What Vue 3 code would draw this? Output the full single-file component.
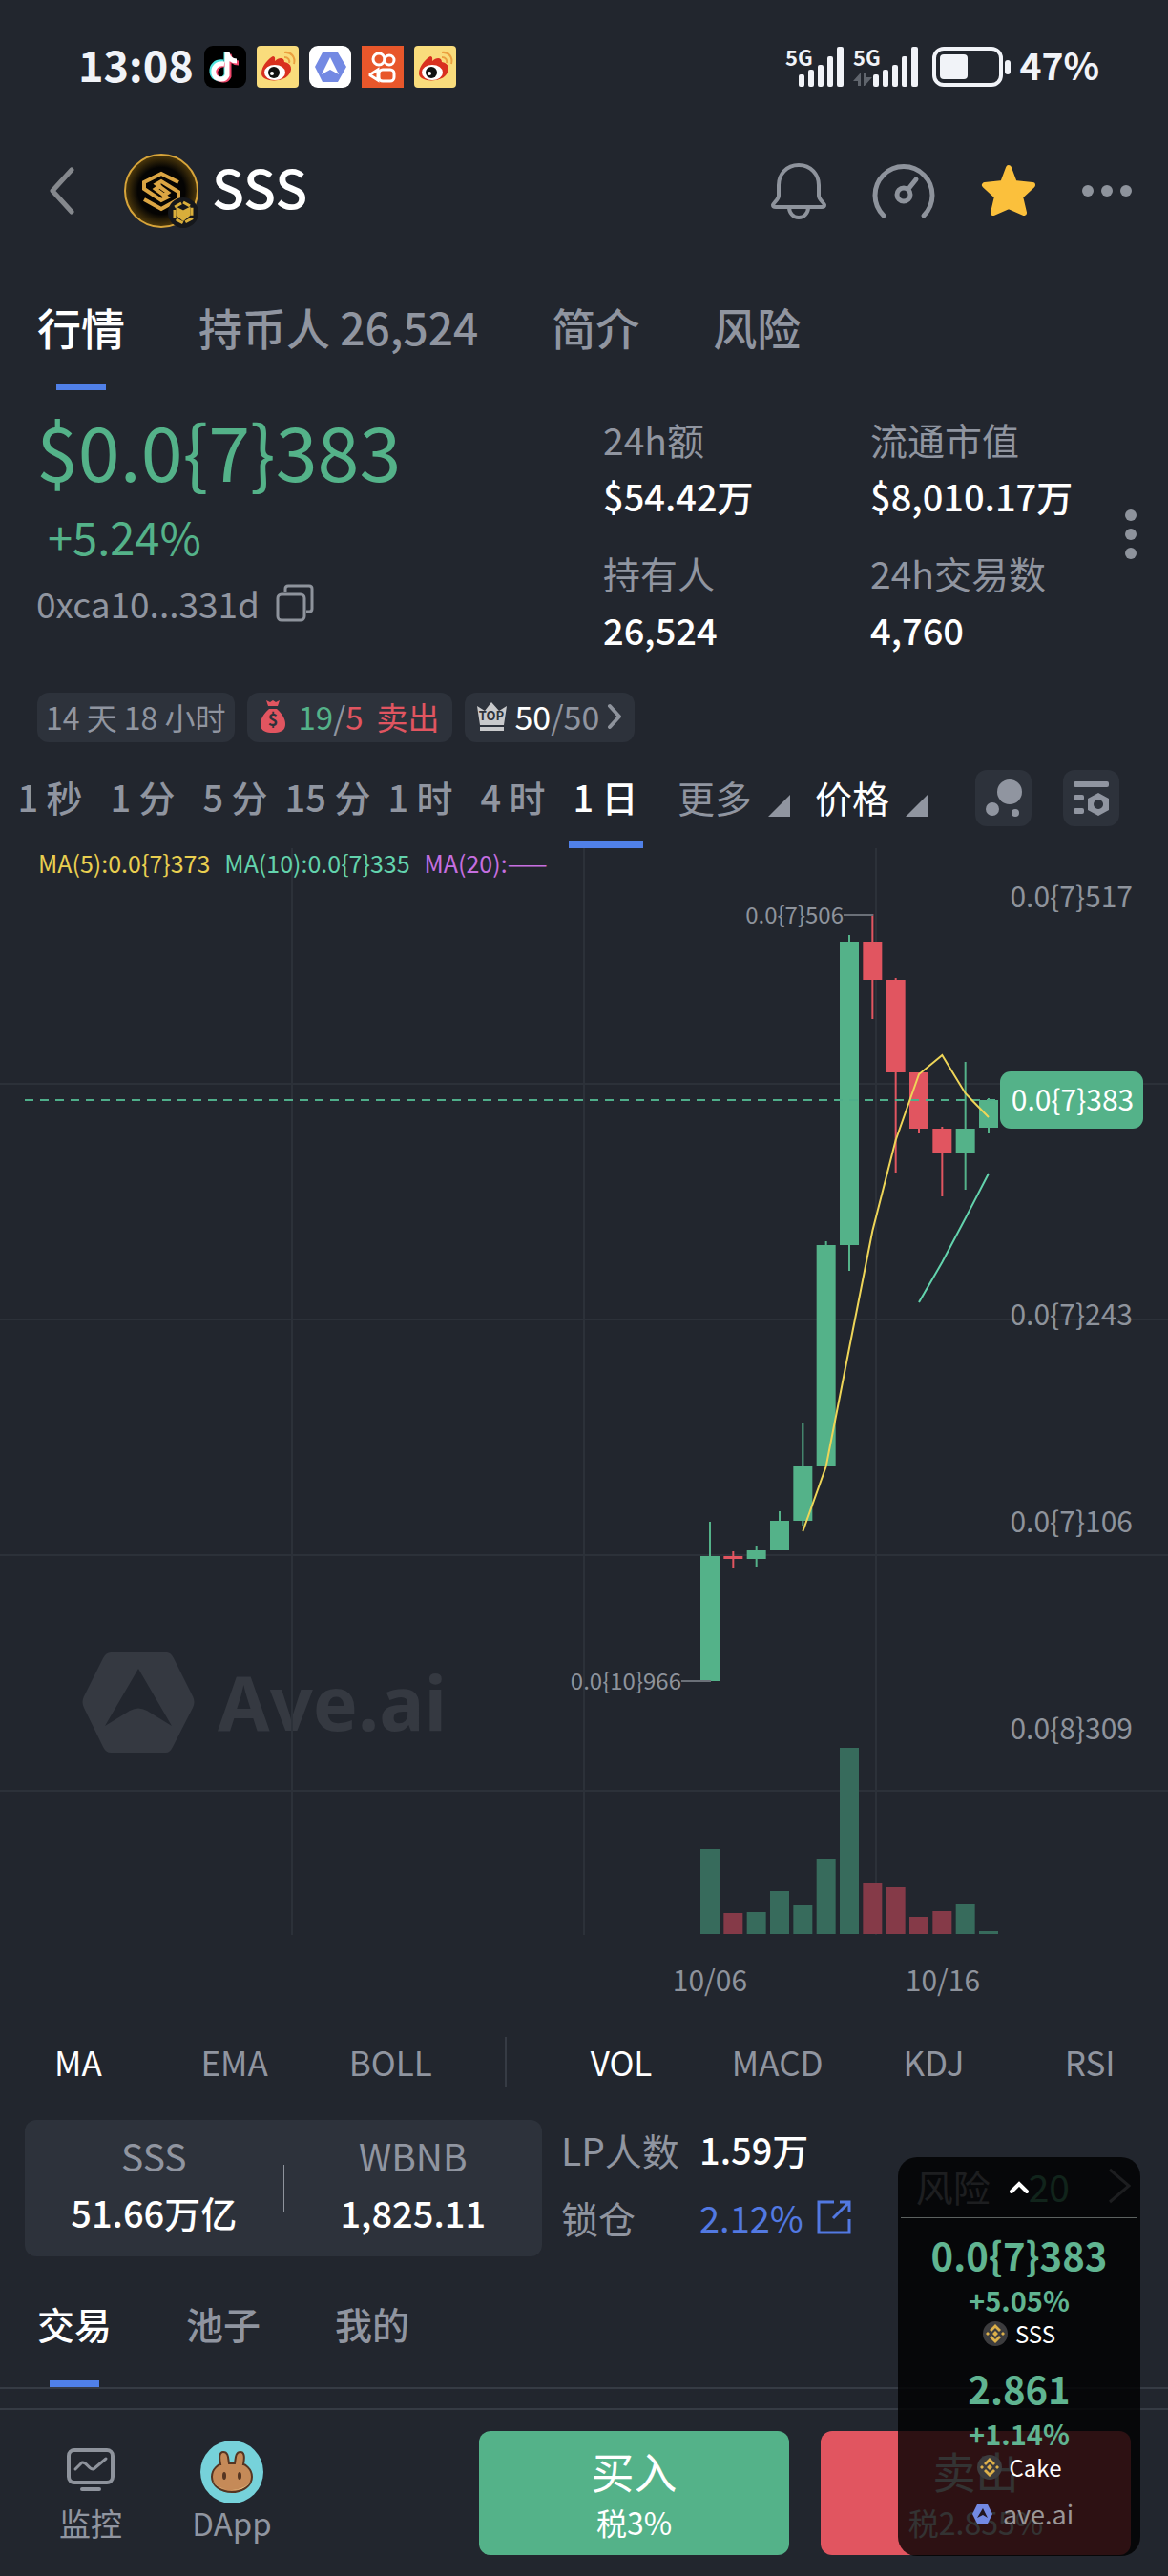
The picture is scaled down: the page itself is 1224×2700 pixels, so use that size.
<script setup>
import { ref } from 'vue'

const mainTabs = ['行情', '持币人 26,524', '简介', '风险']
const mainTab = ref(0)
const stats = [
  { label: '24h额', value: '$54.42万' },
  { label: '流通市值', value: '$8,010.17万' },
  { label: '持有人', value: '26,524' },
  { label: '24h交易数', value: '4,760' },
]
const intervals = ['1 秒', '1 分', '5 分', '15 分', '1 时', '4 时', '1 日']
const interval = ref(6)
const mainIndicators = ['MA', 'EMA', 'BOLL']
const subIndicators = ['VOL', 'MACD', 'KDJ', 'RSI']
const mainIndicator = ref('MA')
const subIndicator = ref('VOL')
const tradeTabs = ['交易', '池子', '我的']
const tradeTab = ref(0)

// [rising, wick top, body top, body bottom, wick bottom, volume height]
const rows = [
  [1, 706, 742, 873, 873, 89],
  [0, 737, 742, 745, 754, 22],
  [1, 731, 736, 745, 753, 23],
  [1, 695, 705, 736, 736, 45],
  [1, 602, 648, 705, 710, 30],
  [1, 412, 416, 648, 648, 79],
  [1, 91, 98, 416, 443, 195],
  [0, 69, 98, 138, 179, 53],
  [0, 136, 138, 235, 340, 49],
  [0, 235, 235, 294, 299, 18],
  [0, 292, 294, 320, 365, 24],
  [1, 224, 294, 320, 358, 31],
  [1, 262, 264, 293, 299, 3],
]
const centre = (i) => 744 + (i * 73) / 3
const candles = rows.map(([up, wt, bt, bb, wb, vol], i) => ({ up, wt, bt, bb, wb, vol, x: centre(i) }))
const line = (start, ys) => ys.map((y, i) => `${centre(start + i)},${y}`).join(' ')
const ma5 = line(4, [716, 648, 524, 401, 306, 237, 217, 257, 282])
const ma10 = line(9, [476, 434, 388, 341])
const axis = [
  { y: 62, text: '0.0{7}517' },
  { y: 500, text: '0.0{7}243' },
  { y: 717, text: '0.0{7}106' },
  { y: 934, text: '0.0{8}309' },
]
const watch = [
  { price: '0.0{7}383', change: '+5.05%', name: 'SSS' },
  { price: '2.861', change: '+1.14%', name: 'Cake' },
]
</script>

<template>
  <div class="page">
    <div class="status">
      <div class="status-left">
        <span class="clock">13:08</span>
        <svg class="app" viewBox="0 0 44 44">
          <rect width="44" height="44" rx="9" fill="#000" />
          <g fill="none" stroke-width="5">
            <path d="M21 18c-8-1-13 4-12 11s11 10 15 3V7" stroke="#4fe3df" transform="translate(-1 -1)" />
            <path d="M21 19c-8-1-12 4-11 10s11 9 14 2V8c1 6 5 9 10 9" stroke="#f0466b" transform="translate(2 1)" />
            <path d="M21 19c-8-1-12 4-11 10s11 9 14 2V7c1 6 5 9 10 9" stroke="#fff" />
          </g>
        </svg>
        <svg class="app" viewBox="0 0 44 44">
          <g id="weibo">
            <rect width="44" height="44" rx="4" fill="#f9dc7c" />
            <path d="M5 29c0-8 8-16 12-18 3 0 2 4 2 5 4-4 10-4 10 1 8 1 9 9 4 14-7 8-28 7-28-2z" fill="#d9301f" />
            <ellipse cx="19" cy="28" rx="11" ry="8" fill="#fff" />
            <circle cx="18" cy="28" r="6" fill="#111" /><circle cx="16" cy="29" r="2" fill="#fff" />
            <path d="M29 7c7-1 12 5 10 12M29 12c4 0 6 3 5 6" stroke="#eba040" stroke-width="2" fill="none" />
          </g>
        </svg>
        <svg class="app" viewBox="0 0 44 44">
          <rect width="44" height="44" rx="9" fill="#fff" />
          <path d="M14 7h16l9 15-9 16H14L6 22z" fill="#7389e3" />
          <path d="M22 12l9 18-9-5-9 5z" fill="#fff" />
        </svg>
        <svg class="app" viewBox="0 0 44 44">
          <rect width="44" height="44" fill="#e8572b" />
          <g fill="none" stroke="#fff" stroke-width="3">
            <circle cx="18" cy="14" r="6" /><circle cx="29" cy="15" r="5" />
            <rect x="18" y="25" width="16" height="12" rx="4" /><path d="M17 36l-8-5v-1l8-5z" />
          </g>
        </svg>
        <svg class="app" viewBox="0 0 44 44"><use href="#weibo" /></svg>
      </div>
      <div class="status-right">
        <svg class="signal" width="62" height="42" viewBox="0 0 62 42" fill="#f1f3f8">
          <text x="0" y="20" class="net">5G</text>
          <rect x="14" y="29" width="6" height="13" rx="2" /><rect x="24" y="24" width="6" height="18" rx="2" />
          <rect x="34" y="19" width="6" height="23" rx="2" /><rect x="44" y="10" width="6" height="32" rx="2" />
          <rect x="54" y="0" width="7" height="42" rx="2" />
        </svg>
        <svg class="signal" width="68" height="42" viewBox="0 0 68 42" fill="#f1f3f8">
          <text x="0" y="20" class="net">5G</text>
          <path d="M0 36l8-9v14H5v-5zM11 27h3v5h6l-8 9h-1z" fill="#60656d" />
          <rect x="21" y="29" width="6" height="13" rx="2" /><rect x="31" y="24" width="6" height="18" rx="2" />
          <rect x="41" y="19" width="6" height="23" rx="2" /><rect x="51" y="10" width="6" height="32" rx="2" />
          <rect x="61" y="0" width="7" height="42" rx="2" />
        </svg>
        <svg class="battery" width="82" height="42" viewBox="0 0 82 42">
          <rect x="2" y="2" width="70" height="38" rx="10" fill="none" stroke="#f1f3f8" stroke-width="4" />
          <rect x="8" y="8" width="29" height="26" rx="4" fill="#f1f3f8" /><rect x="76" y="14" width="6" height="15" rx="3" fill="#f1f3f8" />
        </svg>
        <span class="clock level">47%</span>
      </div>
    </div>

    <header class="header">
      <button class="icon" aria-label="返回">
        <svg width="26" height="50" viewBox="0 0 26 50"><path d="M23 3L3 25l20 22" fill="none" stroke="#85888d" stroke-width="5" stroke-linecap="round" stroke-linejoin="round" /></svg>
      </button>
      <svg class="avatar" width="78" height="78" viewBox="0 0 78 78">
        <defs>
          <radialGradient id="coin"><stop offset=".65" stop-color="#050403" /><stop offset="1" stop-color="#4f3a0c" /></radialGradient>
        </defs>
        <circle cx="39" cy="39" r="38" fill="url(#coin)" stroke="#d7a43a" stroke-width="2" />
        <g fill="none" stroke="#dba543" stroke-width="4">
          <path d="M57 30L39 21 21 30v7l18 12 6-3-12-9 6-4" /><path d="M21 48l18 10 18-10v-8L39 29l-5 3 12 9-6 4" />
        </g>
        <circle cx="62" cy="62" r="16" fill="#15171b" />
        <g fill="none" stroke="#d9ae3b" stroke-width="3"><path d="M62 51l9 5v12l-9 5-9-5V56z" stroke-dasharray="8 3" /><path d="M56 58l6 3 6-3v6l-6 5-6-5z" fill="#d9ae3b" /></g>
      </svg>
      <h1>SSS</h1>
      <div class="header-actions">
        <button class="icon" aria-label="提醒">
          <svg width="58" height="60" viewBox="0 0 58 60" fill="none" stroke="#8e939c" stroke-width="4" stroke-linejoin="round">
            <path d="M29 3C16 3 8 13 8 24v11c0 4-5 7-6 10 0 2 1 2 3 2h48c2 0 3 0 3-2-1-3-6-6-6-10V24C50 13 42 3 29 3zM19 47c0 6 4 11 10 11s10-5 10-11" />
          </svg>
        </button>
        <button class="icon" aria-label="监控面板">
          <svg width="66" height="60" viewBox="0 0 66 60" fill="none" stroke="#8e939c" stroke-width="5" stroke-linecap="round">
            <path d="M12 56a30 30 0 1 1 42 0" /><circle cx="33" cy="34" r="7" /><path d="M38 28l8-10" />
          </svg>
        </button>
        <button class="icon" aria-label="收藏">
          <svg width="58" height="56" viewBox="0 0 58 56"><path d="M29 4l6 16 19 2-13 12 4 17-16-7-16 7 4-17L4 22l19-2z" fill="#fbc03c" stroke="#fbc03c" stroke-width="6" stroke-linejoin="round" /></svg>
        </button>
        <button class="icon" aria-label="更多操作">
          <svg width="52" height="12" viewBox="0 0 52 12" fill="#8e939c"><circle cx="6" cy="6" r="6" /><circle cx="26" cy="6" r="6" /><circle cx="46" cy="6" r="6" /></svg>
        </button>
      </div>
    </header>

    <nav class="tabs main-tabs">
      <button v-for="(t, i) in mainTabs" :key="t" :class="{ on: mainTab === i }" @click="mainTab = i">{{ t }}</button>
    </nav>

    <section class="quote">
      <div class="quote-main">
        <div class="price">$0.0{7}383</div>
        <div class="change">+5.24%</div>
        <div class="address">
          <span>0xca10...331d</span>
          <button class="icon" aria-label="复制">
            <svg width="40" height="40" viewBox="0 0 40 40" fill="none" stroke="#8e939c" stroke-width="3"><rect x="2" y="11" width="28" height="27" rx="4" /><path d="M10 8V5c0-2 1-3 3-3h22c2 0 3 1 3 3v21c0 2-1 3-3 3h-3" /></svg>
          </button>
        </div>
      </div>
      <dl class="stats">
        <div v-for="s in stats" :key="s.label"><dt>{{ s.label }}</dt><dd>{{ s.value }}</dd></div>
      </dl>
      <button class="icon" aria-label="更多数据">
        <svg width="12" height="52" viewBox="0 0 12 52" fill="#8e939c"><circle cx="6" cy="6" r="6" /><circle cx="6" cy="26" r="6" /><circle cx="6" cy="46" r="6" /></svg>
      </button>
    </section>

    <div class="chips">
      <span class="chip">14 天 18 小时</span>
      <span class="chip bag">
        <svg width="26" height="34" viewBox="0 0 26 34"><path d="M6 0l4 2 3-2 3 2 4-2-2 6H8zM9 9h8c6 5 9 11 9 16 0 6-4 9-13 9S0 31 0 25C0 20 3 14 9 9z" fill="#e15560" /><text x="13" y="27" text-anchor="middle" class="dollar">$</text></svg>
        <span class="trades"><b class="up">19</b>/<b class="down">5</b></span>
        <b class="down">卖出</b>
      </span>
      <button class="chip top">
        <svg width="31" height="30" viewBox="0 0 31 30" fill="#c9cacc"><path d="M0 4l8 5 7-9 8 9 8-5-3 20H3z" /><rect x="3" y="26" width="25" height="4" /><text x="15" y="19" text-anchor="middle" class="crown">TOP</text></svg>
        <span><b class="white">50</b>/50</span>
        <svg class="go" width="16" height="28" viewBox="0 0 16 28"><path d="M3 3l10 11L3 25" fill="none" stroke="#8e939c" stroke-width="4" stroke-linecap="round" stroke-linejoin="round" /></svg>
      </button>
    </div>

    <div class="toolbar">
      <div class="intervals">
        <button v-for="(t, i) in intervals" :key="t" :class="{ on: interval === i }" @click="interval = i">{{ t }}</button>
      </div>
      <button class="drop">更多<i></i></button>
      <button class="drop white">价格<i></i></button>
      <div class="tools">
        <button class="tool" aria-label="气泡图">
          <svg width="38" height="40" viewBox="0 0 38 40" fill="#9095a0"><circle cx="25" cy="13" r="13" /><circle cx="7" cy="31" r="7" /><circle cx="31" cy="35" r="4" /></svg>
        </button>
        <button class="tool" aria-label="图表设置">
          <svg width="38" height="36" viewBox="0 0 38 36" fill="#9095a0"><rect width="37" height="6" rx="2" /><rect y="14" width="11" height="6" rx="2" /><rect y="28" width="11" height="6" rx="2" /><path fill-rule="evenodd" d="M26 12l11 6v12l-11 6-11-6V18zm0 7a5 5 0 1 0 .1 0z" /></svg>
        </button>
      </div>
    </div>

    <figure class="chart">
      <figcaption class="legend">
        <span class="ma5">MA(5):0.0{7}373</span><span class="ma10">MA(10):0.0{7}335</span><span class="ma20">MA(20):——</span>
      </figcaption>
      <svg class="plot" viewBox="0 0 1224 1220">
        <g fill="#353941">
          <path fill-rule="evenodd" d="M116 843h59q4 0 7 6l20 40q3 6 0 12l-21 41q-3 6-7 6h-58q-5 0-8-6l-20-41q-3-6 0-12l20-40q3-6 8-6zm29 17l-35 60 26-16q9-5 18 0l26 16z" />
          <text x="228" y="925" class="brand">Ave.ai</text>
        </g>
        <g stroke="#2c3139" stroke-width="2">
          <path v-for="x in [306, 612, 918]" :key="x" :d="`M${x} 0V1139`" />
          <path v-for="y in [247, 494, 741, 988]" :key="y" :d="`M0 ${y}H1224`" />
        </g>
        <g v-for="c in candles" :key="c.x" :class="c.up ? 'rise' : 'fall'">
          <rect :x="c.x - 1" :y="c.wt" width="2" :height="c.wb - c.wt" />
          <rect :x="c.x - 10" :y="c.bt" width="20" :height="c.bb - c.bt" />
          <rect class="volume" :x="c.x - 10" :y="1138 - c.vol" width="20" :height="c.vol" />
        </g>
        <path d="M26 264H1046" stroke="#4fae8a" stroke-width="2" stroke-dasharray="9 7" />
        <polyline :points="ma5" fill="none" stroke="#eed558" stroke-width="2" />
        <polyline :points="ma10" fill="none" stroke="#63d3ad" stroke-width="2" />
        <path d="M884 70H915M714 873H745" stroke="#6b7078" stroke-width="2" />
        <g class="note" text-anchor="end"><text x="884" y="79">0.0{7}506</text><text x="714" y="882">0.0{10}966</text></g>
        <g class="tick">
          <text v-for="a in axis" :key="a.text" x="1187" :y="a.y" text-anchor="end">{{ a.text }}</text>
          <text x="744" y="1198" text-anchor="middle">10/06</text><text x="988" y="1198" text-anchor="middle">10/16</text>
          <rect x="1048" y="234" width="150" height="60" rx="11" fill="#54b289" />
          <text x="1124" y="275" text-anchor="middle" fill="#fff">0.0{7}383</text>
        </g>
      </svg>
    </figure>

    <div class="indicators">
      <button v-for="t in mainIndicators" :key="t" :class="{ on: mainIndicator === t }" @click="mainIndicator = t">{{ t }}</button>
      <i></i>
      <button v-for="t in subIndicators" :key="t" :class="{ on: subIndicator === t }" @click="subIndicator = t">{{ t }}</button>
    </div>

    <section class="pool">
      <div class="pair">
        <div><span>SSS</span><b>51.66万亿</b></div>
        <i></i>
        <div><span>WBNB</span><b>1,825.11</b></div>
      </div>
      <div class="lp">
        <span>LP人数</span><b>1.59万</b>
        <span>锁仓</span>
        <a href="#lock">2.12%<svg width="36" height="36" viewBox="0 0 36 36" fill="none" stroke="#5279e2" stroke-width="3"><path d="M18 2H2v32h32V20M24 2h10v10M34 2L17 19" /></svg></a>
      </div>
      <a class="risk" href="#risk">
        <span>风险</span><b>20</b>
        <svg width="24" height="38" viewBox="0 0 24 38"><path d="M2 2l20 17L2 36" fill="none" stroke="#9095a0" stroke-width="3" /></svg>
      </a>
    </section>

    <nav class="tabs trade-tabs">
      <button v-for="(t, i) in tradeTabs" :key="t" :class="{ on: tradeTab === i }" @click="tradeTab = i">{{ t }}</button>
    </nav>

    <footer class="actions">
      <button class="shortcut">
        <svg width="50" height="66" viewBox="0 0 50 66" fill="none" stroke="#8e939c" stroke-width="4" stroke-linecap="round" stroke-linejoin="round"><rect x="2" y="10" width="46" height="34" rx="6" /><path d="M9 30l7-7c5-1 7 8 12 7L41 19" stroke-width="3" /><path d="M16 51h18" /></svg>
        监控
      </button>
      <button class="shortcut">
        <svg width="66" height="66" viewBox="0 0 66 66">
          <circle cx="33" cy="33" r="33" fill="#76d2da" />
          <path d="M12 38c0 9 9 16 21 16s21-7 21-16-8-13-9-13c1-5 2-13-3-13-6 0-5 8-6 12h-6c-1-4 0-12-6-12-5 0-4 8-3 13-1 0-9 4-9 13z" fill="#c58a58" stroke="#553522" stroke-width="2" />
          <path d="M13 42c4 13 36 13 40 0-6 13-34 13-40 0z" fill="#fce3a0" />
          <ellipse cx="25" cy="37" rx="2" ry="4" fill="#553522" /><ellipse cx="41" cy="37" rx="2" ry="4" fill="#553522" />
        </svg>
        DApp
      </button>
      <button class="trade buy">买入<small>税3%</small></button>
      <button class="trade sell">卖出<small>税2.855%</small></button>
    </footer>

    <aside class="float">
      <button class="fold" aria-label="收起">
        <svg width="20" height="14" viewBox="0 0 20 14"><path d="M2 11l8-8 8 8" fill="none" stroke="#fff" stroke-width="4" stroke-linecap="round" /></svg>
      </button>
      <div v-for="w in watch" :key="w.name" class="watch">
        <strong>{{ w.price }}</strong>
        <em>{{ w.change }}</em>
        <span>
          <svg width="26" height="26" viewBox="0 0 26 26"><circle cx="13" cy="13" r="13" fill="#3c3c3e" /><g fill="#dcb04a"><path d="M13 3l6 6-2 2-4-4-4 4-2-2zM13 23l6-6-2-2-4 4-4-4-2 2zM13 10l3 3-3 3-3-3zM5 11l2 2-2 2-2-2zM21 11l2 2-2 2-2-2z" /></g></svg>
          {{ w.name }}
        </span>
      </div>
      <div class="source">
        <svg width="21" height="20" viewBox="0 0 21 20"><path d="M5 0h11l5 10-5 10H5L0 10z" fill="#7389e3" /><path d="M11 4l5 10-5-3-6 3z" fill="#22151f" /></svg>
        ave.ai
      </div>
    </aside>
  </div>
</template>

<style>
body { background: #22262e; }
</style>

<style scoped>
.page {
  position: relative;
  background: #22262e;
  color: #9095a0;
  font-family: "Noto Sans CJK SC", "Noto Sans", sans-serif;
  font-size: 39px;
  line-height: 60px;
  overflow: hidden;
}
button {
  border: 0;
  padding: 0;
  margin: 0;
  background: none;
  color: inherit;
  font: inherit;
  white-space: nowrap;
  cursor: pointer;
}
a { color: inherit; text-decoration: none; }
b { font-weight: inherit; }
svg { display: block; flex: none; }
h1, dl, dd, figure { margin: 0; }
.icon { display: flex; }
.white { color: #fff; }
.up { color: #54b289; }
.down { color: #e15560; }

.status { display: flex; justify-content: space-between; align-items: center; height: 140px; padding: 0 72px 0 82px; }
.status-left, .status-right { display: flex; align-items: center; }
.status-left { gap: 11px; }
.app { width: 44px; height: 44px; }
.clock { color: #f1f3f8; font-size: 45px; font-weight: 700; padding-bottom: 6px; }
.level { font-size: 39px; }
.signal { overflow: visible; }
.net { font-size: 22px; font-weight: 700; }
.status-right { gap: 9px; }
.battery { margin-left: 6px; }

.header { display: flex; align-items: center; height: 120px; padding: 0 38px 0 52px; }
.avatar { margin: 0 14px 0 52px; }
h1 { color: #fff; font-size: 56px; font-weight: 500; line-height: 80px; padding-bottom: 10px; }
.header-actions { display: flex; align-items: center; gap: 48px; margin-left: auto; }

.tabs { display: flex; gap: 77px; padding: 49px 39px 0; }
.tabs button { display: flex; flex-direction: column; align-items: center; gap: 27px; line-height: 66px; }
.tabs button::after { content: ""; width: 52px; height: 7px; }
.main-tabs { font-size: 46px; font-weight: 500; }
.tabs .on { color: #fff; }
.tabs .on::after { background: #5080e8; }

.quote { display: flex; align-items: center; padding: 21px 33px 0 38px; }
.quote-main { flex: 1; align-self: flex-start; }
.price { color: #54b289; font-size: 79px; line-height: 82px; }
.change { color: #54b289; font-size: 47px; line-height: 100px; padding-left: 12px; }
.address { display: flex; align-items: center; gap: 17px; font-size: 37px; line-height: 38px; }
.stats { display: grid; grid-template-columns: 280px 267px; row-gap: 20px; }
.stats dd { color: #fff; font-size: 38px; font-weight: 500; }

.chips { display: flex; gap: 13px; padding: 36px 39px 0; font-size: 32px; line-height: 46px; }
.chip { display: flex; align-items: center; height: 52px; box-sizing: border-box; padding: 0 9px 2px; border-radius: 12px; background: #2d323b; }
.chips button { line-height: 46px; }
.bag { padding: 0 14px 2px; gap: 14px; font-size: 33px; }
.dollar { font-size: 18px; font-weight: 700; fill: #2d323b; }
.chips .top { padding: 0 13px 2px; gap: 8px; font-size: 34px; }
.crown { font-size: 13px; font-weight: 700; fill: #2d323b; }

.toolbar { display: flex; align-items: flex-start; height: 82px; padding: 29px 51px 0 4px; font-size: 38px; line-height: 56px; }
.intervals { display: flex; }
.intervals button { display: flex; flex-direction: column; align-items: center; justify-content: space-between; width: 97px; height: 82px; font-weight: 500; }
.intervals button::after { content: ""; width: 78px; height: 7px; }
.intervals .on { color: #fff; }
.intervals .on::after { background: #5080e8; }
.drop { display: flex; align-items: flex-end; gap: 17px; padding-right: 26px; font-size: 39px; }
.drop:first-of-type { margin-left: 27px; }
.drop i { border-left: 23px solid transparent; border-bottom: 23px solid #9095a0; margin-bottom: 7px; }
.tools { display: flex; gap: 33px; margin-left: auto; }
.tool { display: grid; place-items: center; width: 59px; height: 59px; border-radius: 12px; background: #2d323b; }

.chart { position: relative; }
.legend { position: absolute; top: 0; left: 40px; display: flex; gap: 15px; font-size: 25px; line-height: 30px; }
.ma5 { color: #e9cf50; }
.ma10 { color: #63d3ad; }
.ma20 { color: #c66fe0; }
.plot { width: 100%; height: auto; }
.brand { font-family: "Noto Sans", sans-serif; font-size: 79px; font-weight: 700; }
.rise { fill: #54b289; }
.fall { fill: #e15560; }
.rise .volume { fill: #376b5c; }
.fall .volume { fill: #853a48; }
.note { font-size: 24px; fill: #8e939c; }
.tick { font-size: 30px; fill: #8e939c; }

.indicators { display: flex; align-items: center; height: 104px; font-size: 35px; }
.indicators button { flex: 1 1 0; }
.indicators .on { color: #fff; }
.indicators i { width: 2px; height: 52px; margin: 0 38px; background: #363b44; }

.pool { display: flex; padding: 9px 39px 0 26px; }
.pair { display: flex; align-items: center; width: 542px; height: 143px; border-radius: 12px; background: #2d323b; }
.pair div { display: flex; flex-direction: column; flex: 1 1 0; align-items: center; margin-bottom: 9px; }
.pair b { color: #fff; font-size: 38px; font-weight: 500; }
.pair i { width: 1px; height: 50px; background: #8e939c; }
.lp { display: grid; grid-template-columns: 145px auto; gap: 9px 0; align-content: start; margin-left: 20px; line-height: 62px; }
.lp b { color: #fff; font-size: 38px; font-weight: 500; }
.lp a { display: flex; align-items: center; gap: 14px; color: #5279e2; font-size: 38px; }
.risk { display: flex; align-items: center; margin-left: auto; padding-bottom: 6px; }
.risk b { color: #54b289; margin: 0 40px; }

.trade-tabs { gap: 78px; padding-top: 40px; border-bottom: 2px solid #363b44; font-weight: 500; }
.trade-tabs button { gap: 30px; line-height: 60px; }

.actions { display: flex; gap: 33px; margin-top: 20px; padding: 22px 39px 22px 30px; border-top: 2px solid #363b44; }
.shortcut { display: flex; flex-direction: column; align-items: center; width: 130px; padding-top: 10px; font-size: 33px; line-height: 40px; }
.actions .shortcut + .shortcut { margin-left: -15px; }
.trade { display: flex; flex-direction: column; align-items: center; justify-content: center; width: 325px; height: 130px; padding-top: 3px; border-radius: 12px; color: #fff; font-size: 45px; line-height: 56px; }
.trade small { font-size: 32px; line-height: 50px; }
.buy { margin-left: auto; background: #54b289; }
.sell { background: #e15560; }

.float { position: absolute; right: 29px; bottom: 21px; width: 254px; height: 418px; border-radius: 20px; background: rgba(0, 0, 0, 0.8); text-align: center; }
.fold { display: grid; place-items: center; width: 248px; height: 64px; margin: 0 3px; border-bottom: 1px solid #5c6260; }
.watch { display: flex; flex-direction: column; align-items: center; height: 140px; }
.watch strong { color: #60b491; font-size: 40px; line-height: 46px; padding-top: 15px; }
.watch em { color: #60b491; font-size: 29px; font-style: normal; font-weight: 700; line-height: 40px; padding-top: 4px; }
.watch span { display: flex; align-items: center; gap: 8px; color: #fff; font-size: 24px; line-height: 32px; }
.source { display: flex; align-items: center; justify-content: center; gap: 11px; padding: 10px 0 0 8px; color: #9a9698; font-size: 27px; line-height: 40px; }
</style>
